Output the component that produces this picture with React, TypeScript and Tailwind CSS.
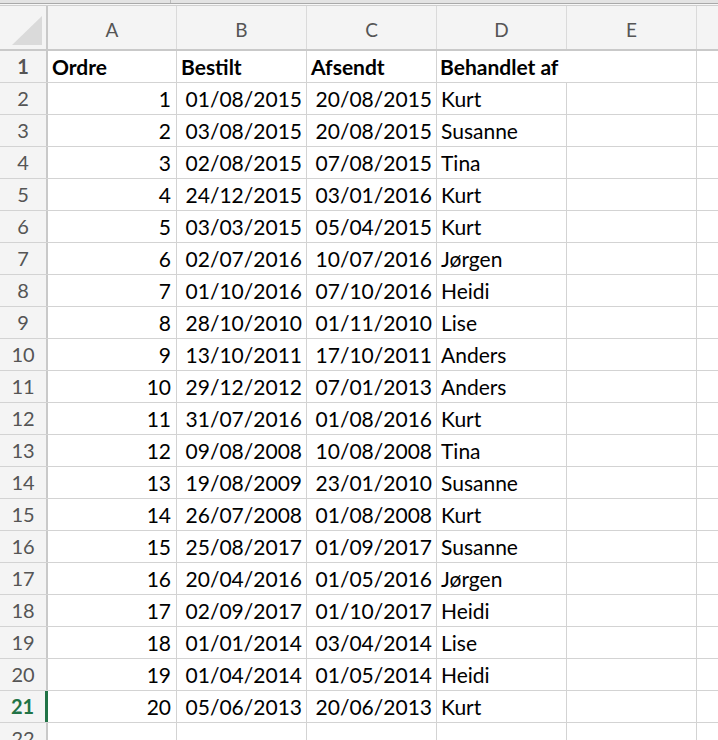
import React from "react";

type Row = [number, string, string, string];

const data: Row[] = [
  [1, "01/08/2015", "20/08/2015", "Kurt"],
  [2, "03/08/2015", "20/08/2015", "Susanne"],
  [3, "02/08/2015", "07/08/2015", "Tina"],
  [4, "24/12/2015", "03/01/2016", "Kurt"],
  [5, "03/03/2015", "05/04/2015", "Kurt"],
  [6, "02/07/2016", "10/07/2016", "Jørgen"],
  [7, "01/10/2016", "07/10/2016", "Heidi"],
  [8, "28/10/2010", "01/11/2010", "Lise"],
  [9, "13/10/2011", "17/10/2011", "Anders"],
  [10, "29/12/2012", "07/01/2013", "Anders"],
  [11, "31/07/2016", "01/08/2016", "Kurt"],
  [12, "09/08/2008", "10/08/2008", "Tina"],
  [13, "19/08/2009", "23/01/2010", "Susanne"],
  [14, "26/07/2008", "01/08/2008", "Kurt"],
  [15, "25/08/2017", "01/09/2017", "Susanne"],
  [16, "20/04/2016", "01/05/2016", "Jørgen"],
  [17, "02/09/2017", "01/10/2017", "Heidi"],
  [18, "01/01/2014", "03/04/2014", "Lise"],
  [19, "01/04/2014", "01/05/2014", "Heidi"],
  [20, "05/06/2013", "20/06/2013", "Kurt"],
];

const cols = "grid grid-cols-[48px_129px_130px_130px_130px_130px_1fr]";
const cell = "border-r border-[#d3d3d3] px-[4px] whitespace-nowrap";

const RowHeader: React.FC<{ n: number; selected?: boolean }> = ({ n, selected }) => (
  <div className="flex bg-[#f4f4f4] border-r-2 border-[#c9c9c9]">
    <span
      className={`flex-1 text-center text-[20px] ${
        selected ? "text-[#217346] font-bold" : "text-[#555]"
      }`}
    >
      {n}
    </span>
    {selected && <span className="w-[3px] -mr-[2px] bg-[#217346]" />}
  </div>
);

export default function App() {
  return (
    <div className="w-[718px] h-[740px] overflow-hidden bg-white font-['Lato',sans-serif] text-black">
      {/* window chrome strip */}
      <div className="flex h-[3px] bg-[#e3e3e3]">
        <div className="w-[170px]" />
        <div className="w-px bg-[#bcbcbc]" />
      </div>
      <div className="h-px bg-[#a9a9a9]" />
      <div className="h-px bg-[#f7f7f7]" />
      <div className="h-px bg-[#cfcfcf]" />

      {/* column headers */}
      <div className={`${cols} h-[45px] bg-[#f4f4f4] border-b-2 border-[#c9c9c9] text-[19px] text-[#555]`}>
        <div className="flex items-end justify-end pr-[4px] pb-[4px] border-r-2 border-[#c9c9c9]">
          <svg width="30" height="29" viewBox="0 0 30 29">
            <polygon points="30,0 30,29 0,29" fill="#dadada" />
          </svg>
        </div>
        {["A", "B", "C", "D", "E", ""].map((c, i) => (
          <div
            key={i}
            className={`flex items-center justify-center pt-[5px] ${i < 5 ? "border-r border-[#dadada]" : ""}`}
          >
            {c}
          </div>
        ))}
      </div>

      {/* row 1: titles */}
      <div className={`${cols} h-[32px] leading-[31px] border-b border-[#d3d3d3] text-[21px] font-bold`}>
        <RowHeader n={1} />
        <div className={cell}>Ordre</div>
        <div className={cell}>Bestilt</div>
        <div className={cell}>Afsendt</div>
        <div className="px-[3px] whitespace-nowrap overflow-visible">Behandlet af</div>
        <div className={cell} />
        <div />
      </div>

      {data.map(([n, b, a, who], i) => (
        <div
          key={n}
          className={`${cols} h-[32px] leading-[31px] border-b border-[#d3d3d3] text-[21px]`}
        >
          <RowHeader n={i + 2} selected={i + 2 === 21} />
          <div className={`${cell} text-right pr-[5px]`}>{n}</div>
          <div className={`${cell} text-right`}>{b}</div>
          <div className={`${cell} text-right`}>{a}</div>
          <div className={`${cell} px-[3px]`}>{who}</div>
          <div className={cell} />
          <div />
        </div>
      ))}

      <div className={`${cols} h-[32px] leading-[31px] text-[21px]`}>
        <RowHeader n={22} />
        <div className={cell} />
        <div className={cell} />
        <div className={cell} />
        <div className={cell} />
        <div className={cell} />
        <div />
      </div>
    </div>
  );
}
